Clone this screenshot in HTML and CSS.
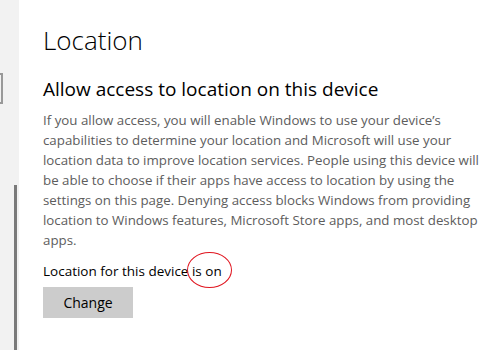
FILE: index.html
```html
<!DOCTYPE html>
<html lang="en">
<head>
    <meta charset="UTF-8">
    <title>Settings - Location</title>
    <link rel="stylesheet" href="styles.css">
</head>
<body>
    <div class="sidebar">
        <div class="search-box"></div>
        <div class="scrollbar"></div>
    </div>
    <div class="content">
        <h1>Location</h1>
        <h2>Allow access to location on this device</h2>
        <p class="description">If you allow access, you will enable Windows to use your device’s capabilities to determine your location and Microsoft will use your location data to improve location services. People using this device will be able to choose if their apps have access to location by using the settings on this page. Denying access blocks Windows from providing location to Windows features, Microsoft Store apps, and most desktop apps.</p>
        <p class="status">Location for this device <span class="marked">is on</span></p>
        <button class="change-btn">Change</button>
    </div>
</body>
</html>
```

FILE: styles.css
```css
html, body {
    height: 100%;
}
body {
    margin: 0;
    display: flex;
    font-family: "Open Sans", "Noto Sans", sans-serif;
    background-color: #ffffff;
    color: #000000;
    overflow: hidden;
}
.sidebar {
    width: 19px;
    flex-shrink: 0;
    background-color: #f2f2f2;
    display: flex;
    flex-direction: column;
}
.search-box {
    margin-top: 73px;
    width: 1px;
    height: 27px;
    border: 2px solid #999999;
    border-left: none;
}
.scrollbar {
    margin-top: 81px;
    margin-left: 14px;
    width: 3px;
    flex: 1;
    background-color: #7a7a7a;
}
.content {
    padding-left: 24px;
    width: 437px;
}
h1 {
    font-weight: 300;
    font-size: 26px;
    margin: 22px 0 0;
    line-height: 36px;
}
h2 {
    font-weight: 400;
    font-size: 19px;
    margin: 18px 0 0;
    line-height: 26px;
}
.description {
    font-size: 13.3px;
    line-height: 20px;
    color: #5d5d5d;
    margin: 8px 0 0;
}
.status {
    font-size: 13.5px;
    line-height: 20px;
    margin: 11px 0 0;
}
.marked {
    position: relative;
}
.marked::after {
    content: '';
    position: absolute;
    left: -5px;
    top: -10px;
    width: 43px;
    height: 34px;
    border: 1px solid #e0141e;
    border-radius: 50%;
}
.change-btn {
    margin-top: 6px;
    width: 90px;
    height: 31px;
    border: none;
    background-color: #cccccc;
    font-family: inherit;
    font-size: 14px;
    color: #000000;
    padding: 0;
}
```
